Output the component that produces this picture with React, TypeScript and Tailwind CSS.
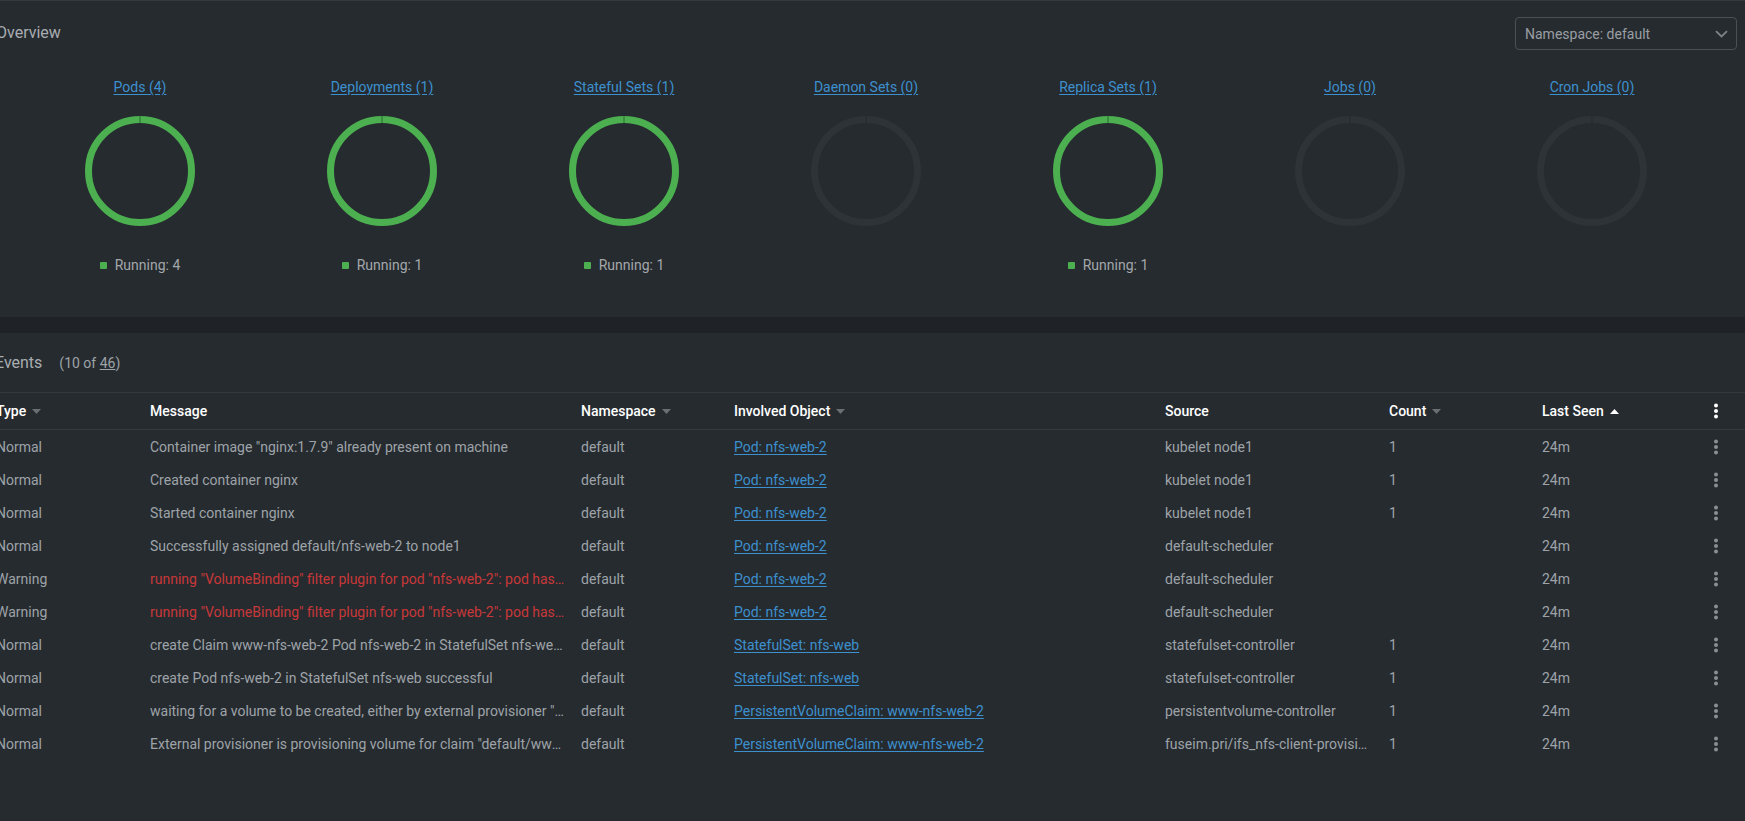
import React from "react";

type Chart = { title: string; running?: number };

const charts: Chart[] = [
  { title: "Pods (4)", running: 4 },
  { title: "Deployments (1)", running: 1 },
  { title: "Stateful Sets (1)", running: 1 },
  { title: "Daemon Sets (0)" },
  { title: "Replica Sets (1)", running: 1 },
  { title: "Jobs (0)" },
  { title: "Cron Jobs (0)" },
];

type Event = {
  type: string;
  message: string;
  object: string;
  source: string;
  count: string;
};

const events: Event[] = [
  { type: "Normal", message: 'Container image "nginx:1.7.9" already present on machine', object: "Pod: nfs-web-2", source: "kubelet node1", count: "1" },
  { type: "Normal", message: "Created container nginx", object: "Pod: nfs-web-2", source: "kubelet node1", count: "1" },
  { type: "Normal", message: "Started container nginx", object: "Pod: nfs-web-2", source: "kubelet node1", count: "1" },
  { type: "Normal", message: "Successfully assigned default/nfs-web-2 to node1", object: "Pod: nfs-web-2", source: "default-scheduler", count: "" },
  { type: "Warning", message: 'running "VolumeBinding" filter plugin for pod "nfs-web-2": pod has unbound immediate PersistentVolumeClaims', object: "Pod: nfs-web-2", source: "default-scheduler", count: "" },
  { type: "Warning", message: 'running "VolumeBinding" filter plugin for pod "nfs-web-2": pod has unbound immediate PersistentVolumeClaims', object: "Pod: nfs-web-2", source: "default-scheduler", count: "" },
  { type: "Normal", message: "create Claim www-nfs-web-2 Pod nfs-web-2 in StatefulSet nfs-web success", object: "StatefulSet: nfs-web", source: "statefulset-controller", count: "1" },
  { type: "Normal", message: "create Pod nfs-web-2 in StatefulSet nfs-web successful", object: "StatefulSet: nfs-web", source: "statefulset-controller", count: "1" },
  { type: "Normal", message: 'waiting for a volume to be created, either by external provisioner "fuseim.pri/ifs" or manually', object: "PersistentVolumeClaim: www-nfs-web-2", source: "persistentvolume-controller", count: "1" },
  { type: "Normal", message: 'External provisioner is provisioning volume for claim "default/www-nfs-web-2"', object: "PersistentVolumeClaim: www-nfs-web-2", source: "fuseim.pri/ifs_nfs-client-provisioner_node1", count: "1" },
];

const gridCols = "grid grid-cols-[154px_431px_153px_431px_224px_153px_1fr_30px] items-center";

function Ring({ active }: { active: boolean }) {
  return (
    <svg width="110" height="110" viewBox="0 0 110 110">
      <circle cx="55" cy="55" r="51.5" fill="none" stroke={active ? "#4caf50" : "#2e3337"} strokeWidth="7" />
      <line x1="55" y1="0" x2="55" y2="7" stroke={active ? "#2d6b31" : "#262b30"} strokeWidth="1" />
    </svg>
  );
}

function SortArrow({ up, light }: { up?: boolean; light?: boolean }) {
  return (
    <svg width="9" height="5" viewBox="0 0 9 5" className="ml-[6px]">
      <polygon points={up ? "0,5 9,5 4.5,0" : "0,0 9,0 4.5,5"} fill={light ? "#ffffff" : "#6a6f74"} />
    </svg>
  );
}

function Kebab({ color }: { color: string }) {
  return (
    <svg width="6" height="16" viewBox="0 0 6 16">
      <circle cx="3" cy="2.5" r="2" fill={color} />
      <circle cx="3" cy="8" r="2" fill={color} />
      <circle cx="3" cy="13.5" r="2" fill={color} />
    </svg>
  );
}

export default function App() {
  return (
    <div className="w-[1745px] h-[821px] overflow-hidden bg-[#262b30] font-['Roboto','Liberation_Sans',sans-serif] text-sm text-[#9ea3a8]">
      {/* Overview */}
      <div className="h-[317px] border-t border-[#34393e]">
        <div className="flex items-center justify-between pt-[16px] pr-2">
          <div className="-ml-1 text-base text-[#a9adb1] -mt-[2px]">Overview</div>
          <div className="w-[222px] h-[33px] border border-[#4b5056] rounded flex items-center justify-between pl-[9px] pr-[8px] text-[#999ea3]">
            <span>Namespace: default</span>
            <svg width="13" height="8" viewBox="0 0 13 8">
              <path d="M1 1.2 L6.5 6.5 L12 1.2" fill="none" stroke="#7e8388" strokeWidth="1.8" />
            </svg>
          </div>
        </div>
        <div className="flex pl-[19px] mt-[27px]">
          {charts.map((c) => (
            <div key={c.title} className="w-[242px] flex flex-col items-center">
              <a className="h-5 leading-5 text-[#3d90ce] underline underline-offset-2">{c.title}</a>
              <div className="mt-[19px]">
                <Ring active={c.running !== undefined} />
              </div>
              <div className="mt-[29px] h-5 flex items-center gap-2 text-[#a3a7ab]">
                {c.running !== undefined && (
                  <>
                    <span className="w-[7px] h-[7px] rounded-[1px] bg-[#4caf50]" />
                    <span>Running: {c.running}</span>
                  </>
                )}
              </div>
            </div>
          ))}
        </div>
      </div>

      <div className="h-[16px] bg-[#1f2226]" />

      {/* Events */}
      <div className="h-[59px] flex items-center">
        <span className="-ml-[5px] text-base text-[#a9adb1]">Events</span>
        <span className="ml-[17px] text-[#9ea3a8]">
          (10 of <span className="underline">46</span>)
        </span>
      </div>

      <div className="border-y border-[#33383d] h-[38px]">
        <div className={`${gridCols} -ml-1 w-[1735px] h-full text-white font-medium`}>
          <div className="flex items-center">Type<SortArrow /></div>
          <div>Message</div>
          <div className="flex items-center">Namespace<SortArrow /></div>
          <div className="flex items-center">Involved Object<SortArrow /></div>
          <div>Source</div>
          <div className="flex items-center">Count<SortArrow /></div>
          <div className="flex items-center">Last Seen<SortArrow up light /></div>
          <div className="flex justify-center"><Kebab color="#ffffff" /></div>
        </div>
      </div>

      <div>
        {events.map((e, i) => (
          <div key={i} className={`${gridCols} -ml-1 w-[1735px] h-[33px]`}>
            <div className="truncate pr-4">{e.type}</div>
            <div className={`truncate pr-4 ${e.type === "Warning" ? "text-[#c83838]" : ""}`}>{e.message}</div>
            <div className="truncate pr-4">default</div>
            <div className="truncate pr-4">
              <a className="text-[#3d90ce] underline underline-offset-2">{e.object}</a>
            </div>
            <div className="truncate pr-4">{e.source}</div>
            <div className="truncate pr-4">{e.count}</div>
            <div className="truncate pr-4">24m</div>
            <div className="flex justify-center"><Kebab color="#8a8f95" /></div>
          </div>
        ))}
      </div>
    </div>
  );
}
